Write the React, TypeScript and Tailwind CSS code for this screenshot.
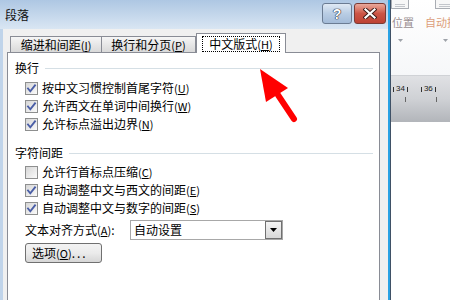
import React from "react";

const F = "font-['Noto_Sans_CJK_SC','Noto_Sans_CJK_JP',sans-serif]";

function U({ c }: { c: string }) {
  return (
    <span className="text-[11px]">
      (<span className="underline underline-offset-[1px]">{c}</span>)
    </span>
  );
}

function Box({ checked }: { checked: boolean }) {
  return (
    <div className="w-[13px] h-[13px] border border-[#8e8f8f] bg-linear-to-br from-[#d6d6d6] to-[#fbfbfb] flex items-center justify-center shrink-0">
      {checked && (
        <svg width="11" height="11" viewBox="0 0 11 11">
          <path d="M2 5.5 L4.3 8.3 L9 2.3" fill="none" stroke="#4a5ea6" strokeWidth="1.9" strokeLinecap="square" />
        </svg>
      )}
    </div>
  );
}

function Row({ checked, label, k }: { checked: boolean; label: string; k: string }) {
  return (
    <div className="h-[18px] flex items-center pl-[17px]">
      <Box checked={checked} />
      <span className="ml-[4px] leading-none whitespace-nowrap">
        {label}
        <U c={k} />
      </span>
    </div>
  );
}

function Heading({ text }: { text: string }) {
  return (
    <div className="h-[18px] flex items-center pl-[7px] pr-[6px]">
      <span className="leading-none whitespace-nowrap">{text}</span>
      <div className="flex-1 h-px bg-[#d5dfe5] ml-[6px]" />
    </div>
  );
}

export default function App() {
  return (
    <div className={`relative w-[450px] h-[300px] flex overflow-hidden bg-white text-[12px] text-black ${F}`}>
      {/* Dialog */}
      <div className="w-[391px] h-full shrink-0 flex flex-col border-r border-r-[#3f5166]">
        <div className="flex-1 flex flex-col border-r-2 border-r-[#2aa2e4]">
          {/* Title bar */}
          <div className="h-[29px] shrink-0 flex items-start bg-linear-to-b from-[#aec7e3] to-[#d9e6f3] pl-[5px] pr-[2px]">
            <span className="mt-[7px] text-[12px] leading-[16px] text-[#111]">段落</span>
            <div className="flex-1" />
            <div className="mt-[3px] w-[30px] h-[21px] rounded-[3px] border border-[#6b7c93] bg-linear-to-b from-[#dfe9f4] via-[#b9cde4] to-[#a3bbd8] flex items-center justify-center">
              <span className="font-['Liberation_Sans',sans-serif] font-bold text-[14px] leading-none text-white [text-shadow:0_0_1px_#223,0_0_1px_#223,0_0_1px_#223]">?</span>
            </div>
            <div className="mt-[3px] ml-[2px] w-[32px] h-[21px] rounded-[3px] border border-[#7a3b35] bg-linear-to-b from-[#e9a99c] via-[#cc5546] to-[#bd4234] flex items-center justify-center">
              <svg width="14" height="11" viewBox="0 0 14 11">
                <path d="M2.5 1.5 L11.5 9.5 M11.5 1.5 L2.5 9.5" stroke="#3b1a18" strokeWidth="4" strokeLinecap="square" />
                <path d="M2.5 1.5 L11.5 9.5 M11.5 1.5 L2.5 9.5" stroke="#ffffff" strokeWidth="2.2" strokeLinecap="square" />
              </svg>
            </div>
          </div>
          {/* Body */}
          <div className="flex-1 flex flex-col bg-[#f0f0f0] border-l-[3px] border-l-[#c0d4ea] pl-[4px] pr-[8px] pt-[4px]">
            {/* Tabs */}
            <div className="h-[19px] flex items-end pl-[3px] shrink-0">
              <div className="w-[92px] h-[16px] border border-b-0 border-[#898c95] bg-linear-to-b from-[#f6f6f6] to-[#d9d9d9] flex items-center justify-center">
                <span className="leading-none whitespace-nowrap">缩进和间距<U c="I" /></span>
              </div>
              <div className="w-[94px] h-[16px] border border-b-0 border-l-0 border-[#898c95] bg-linear-to-b from-[#f6f6f6] to-[#d9d9d9] flex items-center justify-center">
                <span className="leading-none whitespace-nowrap">换行和分页<U c="P" /></span>
              </div>
              <div className="relative z-10 -mb-px w-[90px] h-[20px] border border-b-0 border-[#898c95] bg-white flex items-start justify-center pt-[2px]">
                <div className="w-[78px] h-[16px] border border-dotted border-black flex items-center justify-center">
                  <span className="leading-none whitespace-nowrap">中文版式<U c="H" /></span>
                </div>
              </div>
            </div>
            {/* Panel */}
            <div className="flex-1 border border-b-0 border-[#898c95] bg-white flex flex-col pt-[6px]">
              <Heading text="换行" />
              <div className="mt-[2px]" />
              <Row checked label="按中文习惯控制首尾字符" k="U" />
              <Row checked label="允许西文在单词中间换行" k="W" />
              <Row checked label="允许标点溢出边界" k="N" />
              <div className="mt-[11px]" />
              <Heading text="字符间距" />
              <div className="mt-[1px]" />
              <Row checked={false} label="允许行首标点压缩" k="C" />
              <Row checked label="自动调整中文与西文的间距" k="E" />
              <Row checked label="自动调整中文与数字的间距" k="S" />
              <div className="mt-[3px] h-[20px] flex items-center pl-[17px]">
                <span className="w-[105px] leading-none whitespace-nowrap">文本对齐方式<U c="A" />:</span>
                <div className="w-[153px] h-[20px] border border-[#a8a8a8] bg-white flex items-center">
                  <span className="pl-[3px] flex-1 leading-none">自动设置</span>
                  <div className="w-[17px] h-[18px] border border-[#707070] bg-linear-to-b from-[#f4f4f4] to-[#d8d8d8] flex items-center justify-center">
                    <svg width="7" height="4" viewBox="0 0 7 4"><path d="M0 0 H7 L3.5 4 Z" fill="#000" /></svg>
                  </div>
                </div>
              </div>
              <div className="mt-[3px] pl-[17px]">
                <div className="w-[77px] h-[20px] rounded-[3px] border border-[#707070] bg-linear-to-b from-[#f3f3f3] via-[#ebebeb] to-[#d6d6d6] flex items-center pl-[6px]">
                  <span className="leading-none whitespace-nowrap">选项<U c="O" /><span className="tracking-[2px]">...</span></span>
                </div>
              </div>
            </div>
          </div>
        </div>
      </div>

      {/* Background (Word) */}
      <div className="flex-1 flex flex-col bg-white">
        <div className="h-[75px] flex flex-col bg-linear-to-b from-[#ffffff] to-[#f6f7f9]">
          <div className="h-[10px] flex">
            <div className="w-[18px] h-[9px] border border-t-0 border-[#a9adb3] bg-[#f7f7f7] flex flex-col justify-end gap-[1px] px-[3px] pb-[1px]">
              <div className="h-px bg-[#c3c6cb]" />
              <div className="h-px bg-[#c3c6cb]" />
            </div>
            <div className="w-[26px]" />
            <div className="w-[17px] h-[9px] border border-t-0 border-r-0 border-[#a9adb3] bg-[#f7f7f7] flex flex-col justify-end gap-[1px] pl-[3px] pb-[1px]">
              <div className="h-px bg-[#c3c6cb]" />
              <div className="h-px bg-[#c3c6cb]" />
            </div>
          </div>
          <div className="mt-[6px] h-[13px] flex items-center whitespace-nowrap text-[11px] leading-none">
            <span className="text-[#9a8f92] ml-[1px]">位置</span>
            <span className="text-[#dc9f7b] ml-[11px]">自动换</span>
          </div>
          <div className="mt-[10px] flex">
            <svg className="ml-[7px]" width="5" height="3" viewBox="0 0 5 3"><path d="M0 0 H5 L2.5 3 Z" fill="#9ea3aa" /></svg>
            <svg className="ml-[40px]" width="5" height="3" viewBox="0 0 5 3"><path d="M0 0 H5 L2.5 3 Z" fill="#9ea3aa" /></svg>
          </div>
        </div>
        <div className="h-[47px] flex flex-col bg-linear-to-b from-[#e0e1e4] via-[#cfd1d5] to-[#b2b5ba] border-t border-[#d0d2d6]">
          <div className="mt-[9px] flex items-center text-[8px] leading-none text-[#222] font-['Liberation_Sans',sans-serif] whitespace-nowrap">
            <span className="ml-[2px] w-px h-[5px] bg-[#333]" />
            <span className="ml-[2px]">34</span>
            <span className="ml-[2px] w-px h-[5px] bg-[#333]" />
            <span className="ml-[13px] w-px h-[5px] bg-[#333]" />
            <span className="ml-[2px]">36</span>
            <span className="ml-[2px] w-px h-[5px] bg-[#333]" />
          </div>
          <div className="mt-[4px] flex">
            <div className="ml-[14px] w-px h-[5px] bg-[#666]" />
            <div className="ml-[30px] w-px h-[5px] bg-[#666]" />
          </div>
        </div>
        <div className="flex-1 bg-white" />
      </div>

      {/* Red annotation arrow */}
      <svg className="absolute left-0 top-0 pointer-events-none" width="450" height="300" viewBox="0 0 450 300">
        <path d="M278 95 L294 119" stroke="#ff0000" strokeWidth="6" strokeLinecap="round" />
        <path d="M260 69 L288 88 L266 102 Z" fill="#ff0000" />
      </svg>
    </div>
  );
}
